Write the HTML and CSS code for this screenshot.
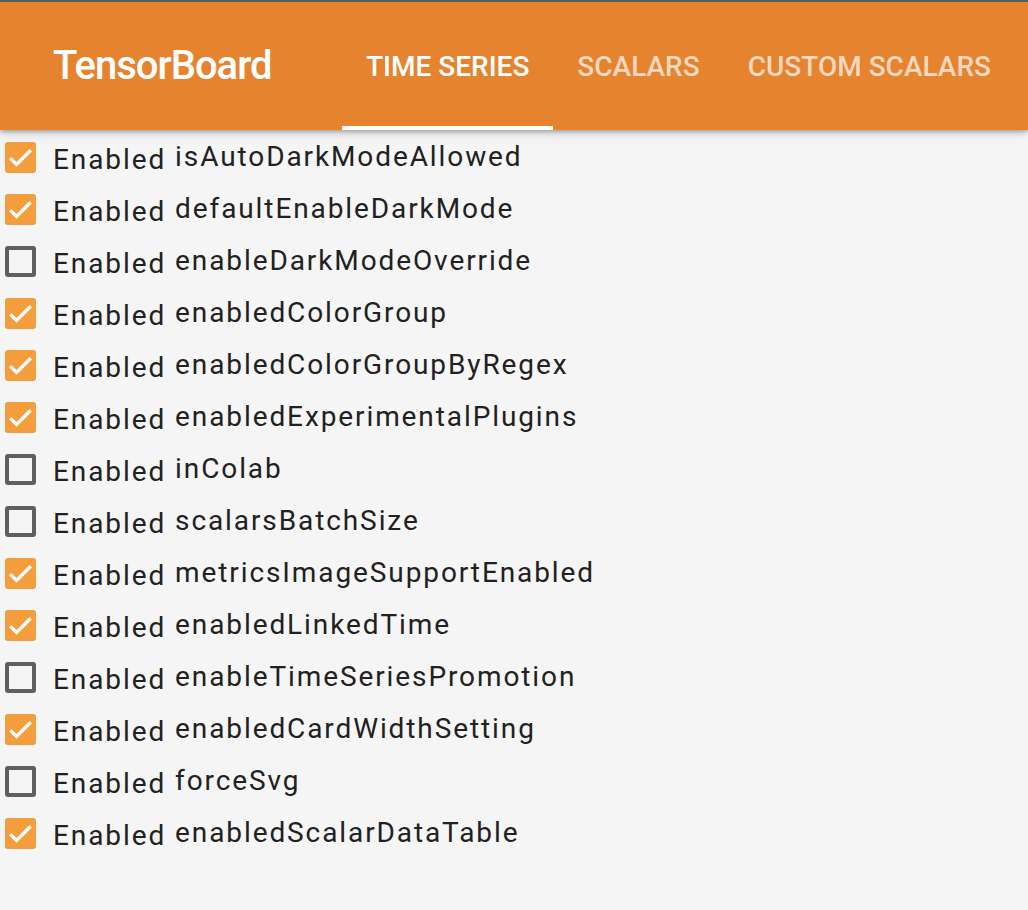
FILE: index.html
```html
<!DOCTYPE html>
<html>
<head>
<meta charset="utf-8">
<link rel="stylesheet" href="styles.css">
</head>
<body>
<header class="toolbar">
  <div class="brand">TensorBoard</div>
  <nav class="tabs">
    <div class="tab active">TIME SERIES</div>
    <div class="tab">SCALARS</div>
    <div class="tab">CUSTOM SCALARS</div>
  </nav>
</header>
<main class="flags">
  <label class="row"><span class="box checked"><svg viewBox="0 0 24 24"><path d="M3.5 12.5l5.2 5.2L20.5 6"/></svg></span><span class="en">Enabled</span><span class="name">isAutoDarkModeAllowed</span></label>
  <label class="row"><span class="box checked"><svg viewBox="0 0 24 24"><path d="M3.5 12.5l5.2 5.2L20.5 6"/></svg></span><span class="en">Enabled</span><span class="name">defaultEnableDarkMode</span></label>
  <label class="row"><span class="box"></span><span class="en">Enabled</span><span class="name">enableDarkModeOverride</span></label>
  <label class="row"><span class="box checked"><svg viewBox="0 0 24 24"><path d="M3.5 12.5l5.2 5.2L20.5 6"/></svg></span><span class="en">Enabled</span><span class="name">enabledColorGroup</span></label>
  <label class="row"><span class="box checked"><svg viewBox="0 0 24 24"><path d="M3.5 12.5l5.2 5.2L20.5 6"/></svg></span><span class="en">Enabled</span><span class="name">enabledColorGroupByRegex</span></label>
  <label class="row"><span class="box checked"><svg viewBox="0 0 24 24"><path d="M3.5 12.5l5.2 5.2L20.5 6"/></svg></span><span class="en">Enabled</span><span class="name">enabledExperimentalPlugins</span></label>
  <label class="row"><span class="box"></span><span class="en">Enabled</span><span class="name">inColab</span></label>
  <label class="row"><span class="box"></span><span class="en">Enabled</span><span class="name">scalarsBatchSize</span></label>
  <label class="row"><span class="box checked"><svg viewBox="0 0 24 24"><path d="M3.5 12.5l5.2 5.2L20.5 6"/></svg></span><span class="en">Enabled</span><span class="name">metricsImageSupportEnabled</span></label>
  <label class="row"><span class="box checked"><svg viewBox="0 0 24 24"><path d="M3.5 12.5l5.2 5.2L20.5 6"/></svg></span><span class="en">Enabled</span><span class="name">enabledLinkedTime</span></label>
  <label class="row"><span class="box"></span><span class="en">Enabled</span><span class="name">enableTimeSeriesPromotion</span></label>
  <label class="row"><span class="box checked"><svg viewBox="0 0 24 24"><path d="M3.5 12.5l5.2 5.2L20.5 6"/></svg></span><span class="en">Enabled</span><span class="name">enabledCardWidthSetting</span></label>
  <label class="row"><span class="box"></span><span class="en">Enabled</span><span class="name">forceSvg</span></label>
  <label class="row"><span class="box checked"><svg viewBox="0 0 24 24"><path d="M3.5 12.5l5.2 5.2L20.5 6"/></svg></span><span class="en">Enabled</span><span class="name">enabledScalarDataTable</span></label>
</main>
</body>
</html>
```
FILE: styles.css
```css
html, body {
  margin: 0;
  padding: 0;
  background: #f5f5f5;
  font-family: Roboto, "Liberation Sans", sans-serif;
  color: #212121;
}
body {
  border-top: 2px solid #5b5b5b;
  min-height: 908px;
}
.toolbar {
  height: 128px;
  background: #e5832f;
  display: flex;
  align-items: stretch;
  box-shadow: 0 2px 4px rgba(0,0,0,0.25), 0 4px 10px rgba(0,0,0,0.12);
  position: relative;
  z-index: 1;
}
.brand {
  display: flex;
  align-items: center;
  padding-left: 53px;
  width: 342px;
  box-sizing: border-box;
  color: #fff;
  font-size: 40px;
  font-weight: 500;
  letter-spacing: -1px;
  padding-bottom: 2px;
}
.tabs {
  display: flex;
  align-items: stretch;
}
.tab {
  display: flex;
  align-items: center;
  padding: 0 24px;
  font-size: 28px;
  font-weight: 500;
  color: rgba(255,255,255,0.7);
  border-bottom: 4px solid transparent;
  box-sizing: border-box;
  padding-top: 4px;
}
.tab.active {
  color: #fff;
  border-bottom-color: #fff;
}
.flags {
  display: flex;
  flex-direction: column;
  padding-top: 1px;
}
.row {
  display: flex;
  align-items: center;
  height: 52px;
  padding-left: 5px;
  font-size: 28px;
  letter-spacing: 1.9px;
}
.box {
  width: 31px;
  height: 31px;
  box-sizing: border-box;
  border: 4px solid #5f5f5f;
  border-radius: 3px;
  margin-right: 17px;
  display: flex;
  align-items: center;
  justify-content: center;
}
.box.checked {
  border: none;
  background: #f39d3c;
}
.box svg {
  width: 29px;
  height: 29px;
  fill: none;
  stroke: #fff;
  stroke-width: 2.8;
}
.en {
  margin-top: 4px;
}
.name {
  margin-left: 9px;
  margin-bottom: 2px;
}
```
